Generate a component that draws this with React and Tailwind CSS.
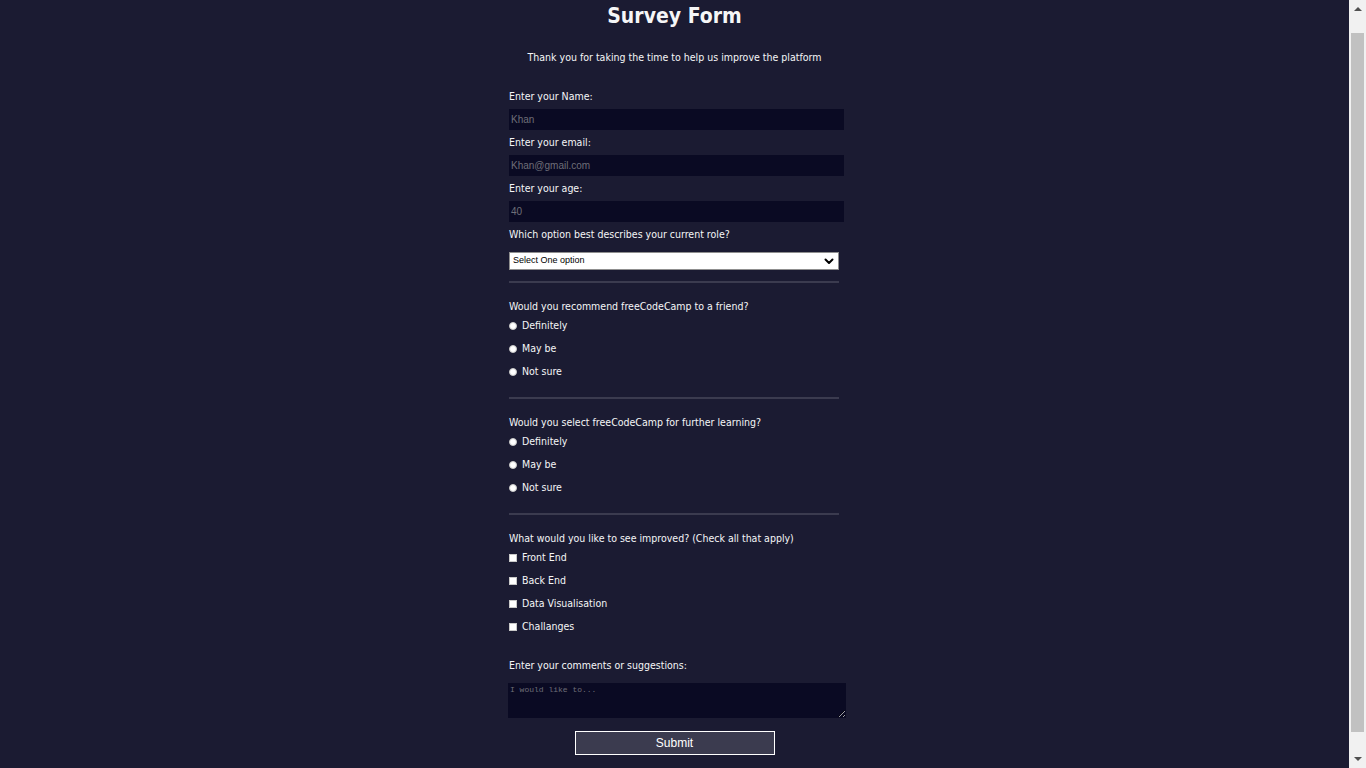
import React from 'react';

const font = { fontFamily: "'DejaVu Sans Condensed', 'DejaVu Sans', sans-serif" };
const arial = { fontFamily: "'Liberation Sans', Arial, sans-serif" };

const Radio = ({ name, label }) => (
  <label className="flex items-center h-[23px] text-[10.5px] text-[#f5f6f7]">
    <input type="radio" name={name} className="appearance-none w-[8px] h-[8px] rounded-full bg-white border border-[#c8c8c8] mr-[5px]" />
    {label}
  </label>
);

const Check = ({ label }) => (
  <label className="flex items-center h-[23px] text-[10.5px] text-[#f5f6f7]">
    <input type="checkbox" className="appearance-none w-[8px] h-[8px] bg-white border border-[#c8c8c8] mr-[5px]" />
    {label}
  </label>
);

const Field = ({ label, placeholder, type }) => (
  <div>
    <label className="block h-[20px] leading-[20px] text-[10.5px] text-[#f5f6f7]">{label}</label>
    <input
      type={type}
      placeholder={placeholder}
      className="block mt-[3px] w-[335px] h-[21px] bg-[#0a0a23] px-[2px] text-[10px] placeholder:text-[#6e6e78] outline-none"
      style={arial}
    />
  </div>
);

// the browser scrollbar that sits at the right edge of the screenshot
const Scrollbar = () => (
  <div className="w-[17px] h-full bg-[#f1f1f1] flex flex-col items-center shrink-0">
    <div className="h-[17px] flex items-center justify-center">
      <svg width="8" height="5" viewBox="0 0 8 5"><path d="M0 5 L4 1 L8 5 Z" fill="#505050" /></svg>
    </div>
    <div className="mt-[16px] w-[13px] h-[699px] bg-[#c1c1c1]" />
    <div className="flex-1" />
    <div className="h-[17px] flex items-center justify-center">
      <svg width="8" height="5" viewBox="0 0 8 5"><path d="M0 0 L4 4 L8 0 Z" fill="#505050" /></svg>
    </div>
  </div>
);

export default function App() {
  return (
    <div className="h-screen flex overflow-hidden bg-[#1b1b32]">
      <main className="flex-1 h-full overflow-hidden text-[#f5f6f7] pt-[3px]" style={font}>
        <h1 className="text-center text-[21px] font-bold leading-[26px]">Survey Form</h1>
        <p className="text-center text-[10.5px] mt-[21px] leading-[14px]">Thank you for taking the time to help us improve the platform</p>

        <form className="w-[331px] mx-auto mt-[22px]">
          <div className="flex flex-col gap-[2px]">
            <Field label="Enter your Name:" placeholder="Khan" type="text" />
            <Field label="Enter your email:" placeholder="Khan@gmail.com" type="email" />
            <Field label="Enter your age:" placeholder="40" type="number" />
          </div>

          <label className="block mt-[2px] h-[20px] leading-[20px] text-[10.5px]">Which option best describes your current role?</label>
          <div
            className="mt-[8px] w-[330px] h-[18px] bg-white border border-[#8f8f8f] flex items-center justify-between pl-[3px] pr-[3px] text-black text-[9px]"
            style={arial}
          >
            <span>Select One option</span>
            <svg width="12" height="12" viewBox="0 0 24 24" fill="none" stroke="black" strokeWidth="4" strokeLinecap="round" strokeLinejoin="round">
              <path d="M5 9l7 7 7-7" />
            </svg>
          </div>

          <hr className="mt-[11px] w-[330px] border-0 h-[2px] bg-[#3b3b4f]" />

          <p className="mt-[15px] text-[10.5px] leading-[16px]">Would you recommend freeCodeCamp to a friend?</p>
          <Radio name="rec" label="Definitely" />
          <Radio name="rec" label="May be" />
          <Radio name="rec" label="Not sure" />

          <hr className="mt-[14px] w-[330px] border-0 h-[2px] bg-[#3b3b4f]" />

          <p className="mt-[15px] text-[10.5px] leading-[16px]">Would you select freeCodeCamp for further learning?</p>
          <Radio name="sel" label="Definitely" />
          <Radio name="sel" label="May be" />
          <Radio name="sel" label="Not sure" />

          <hr className="mt-[14px] w-[330px] border-0 h-[2px] bg-[#3b3b4f]" />

          <p className="mt-[15px] text-[10.5px] leading-[16px]">What would you like to see improved? (Check all that apply)</p>
          <Check label="Front End" />
          <Check label="Back End" />
          <Check label="Data Visualisation" />
          <Check label="Challanges" />

          <label className="block mt-[19px] text-[10.5px] leading-[16px]">Enter your comments or suggestions:</label>
          <textarea
            placeholder="I would like to..."
            className="block mt-[10px] -ml-px w-[338px] h-[35px] bg-[#0a0a23] px-[2px] py-[1px] text-[8px] placeholder:text-[#6e6e78] outline-none"
            style={{ fontFamily: "'Liberation Mono', monospace" }}
          />

          <div className="flex justify-center mt-[13px]">
            <button
              type="button"
              className="w-[200px] h-[24px] bg-[#3b3b4f] border border-white text-white text-[12px]"
              style={arial}
            >
              Submit
            </button>
          </div>
        </form>
      </main>
      <Scrollbar />
    </div>
  );
}
